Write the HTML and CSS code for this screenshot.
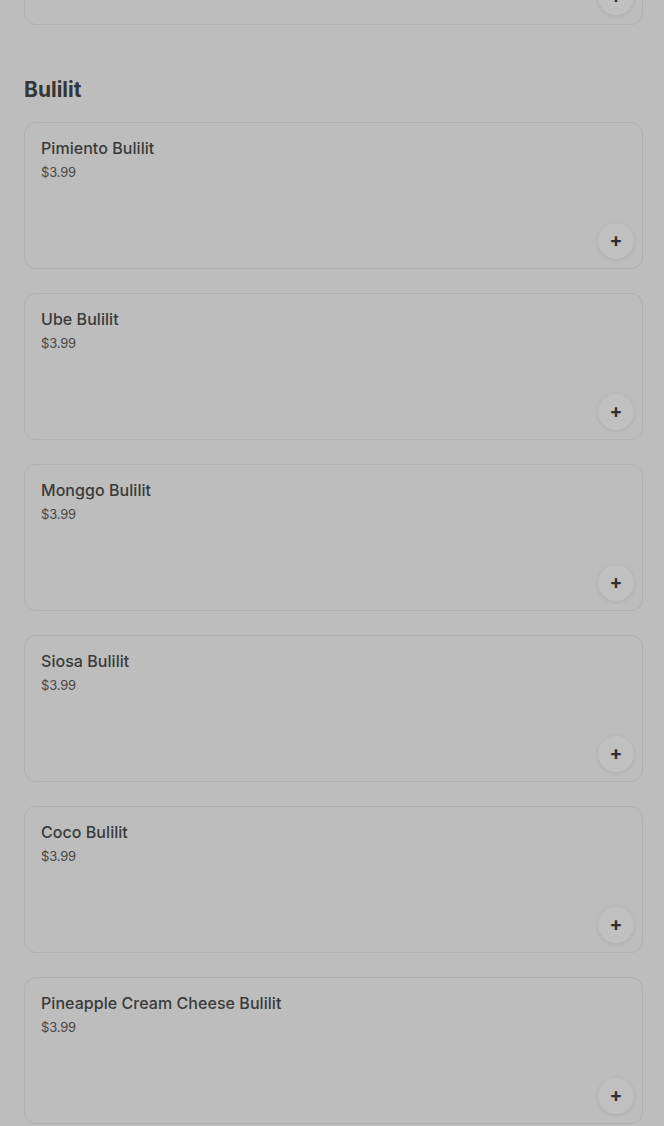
FILE: index.html
```html
<!DOCTYPE html>
<html lang="en">

<head>
    <meta charset="UTF-8">
    <meta name="viewport" content="width=device-width, initial-scale=1.0">
    <title>Menu</title>
    <link rel="stylesheet" href="styles.css">
</head>

<body>
    <div class="menu">
        <!-- bottom of the previous section's last card, scrolled out of view -->
        <div class="section prev-section">
            <div class="item-card">
                <button class="add-btn">+</button>
            </div>
        </div>

        <div class="section">
            <h2 class="section-title">Bulilit</h2>

            <div class="item-card">
                <div class="item-name">Pimiento Bulilit</div>
                <div class="item-price">$3.99</div>
                <button class="add-btn">+</button>
            </div>
            <div class="item-card">
                <div class="item-name">Ube Bulilit</div>
                <div class="item-price">$3.99</div>
                <button class="add-btn">+</button>
            </div>
            <div class="item-card">
                <div class="item-name">Monggo Bulilit</div>
                <div class="item-price">$3.99</div>
                <button class="add-btn">+</button>
            </div>
            <div class="item-card">
                <div class="item-name">Siosa Bulilit</div>
                <div class="item-price">$3.99</div>
                <button class="add-btn">+</button>
            </div>
            <div class="item-card">
                <div class="item-name">Coco Bulilit</div>
                <div class="item-price">$3.99</div>
                <button class="add-btn">+</button>
            </div>
            <div class="item-card">
                <div class="item-name">Pineapple Cream Cheese Bulilit</div>
                <div class="item-price">$3.99</div>
                <button class="add-btn">+</button>
            </div>
        </div>
    </div>
</body>

</html>
```

FILE: styles.css
```css
*,
*::before,
*::after {
    box-sizing: border-box;
}

body {
    margin: 0;
    padding: 0;
    background: #bdbdbd;
    font-family: Inter, "Noto Sans", sans-serif;
    color: #383838;
    overflow: hidden;
}

.menu {
    padding: 0 21px 0 24px;
}

.prev-section {
    margin-top: -122px;
}

.section {
    display: flex;
    flex-direction: column;
    gap: 24px;
}

.section-title {
    margin: 51px 0 -6px;
    font-size: 21px;
    line-height: 28px;
    font-weight: 700;
    color: #353535;
}

.item-card {
    display: flex;
    flex-direction: column;
    min-height: 147px;
    padding: 14px 8px 9px 16px;
    border: 1px solid #b0b0b0;
    border-radius: 12px;
    background: #bdbdbd;
}

.item-name {
    font-size: 16px;
    line-height: 22px;
    font-weight: 500;
    letter-spacing: 0.05px;
    color: #3a3a3a;
}

.item-price {
    margin-top: 4px;
    font-size: 13px;
    line-height: 18px;
    letter-spacing: -0.2px;
    color: #474747;
}

.add-btn {
    margin-top: auto;
    align-self: flex-end;
    width: 36px;
    height: 36px;
    padding: 0;
    border: none;
    border-radius: 50%;
    background: #c0c0c0;
    box-shadow: 0 1px 4px rgba(0, 0, 0, 0.09);
    color: #2f2f2f;
    font-family: Inter, sans-serif;
    font-size: 19px;
    font-weight: 700;
    line-height: 36px;
    text-align: center;
    cursor: pointer;
}
```
